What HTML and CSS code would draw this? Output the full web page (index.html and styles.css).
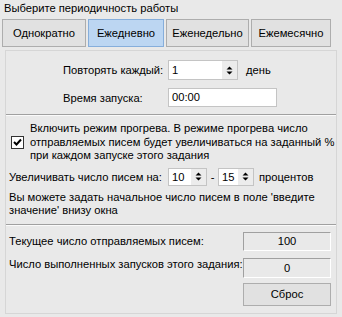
FILE: index.html
```html
<!DOCTYPE html>
<html lang="ru">
<head>
  <meta charset="UTF-8">
  <title>Периодичность работы</title>
  <link rel="stylesheet" href="styles.css">
</head>
<body>

  <div class="caption">Выберите периодичность работы</div>

  <div class="tabs">
    <button class="tab tab-once">Однократно</button>
    <button class="tab tab-daily active">Ежедневно</button>
    <button class="tab tab-weekly">Еженедельно</button>
    <button class="tab tab-monthly">Ежемесячно</button>
  </div>

  <div class="panel">

    <!-- repeat / start time -->
    <div class="schedule">
      <div class="row">
        <span class="label">Повторять каждый:</span>
        <div class="spin spin-day">
          <span class="spin-value">1</span>
          <span class="spin-arrows">
            <svg width="7" height="9" viewBox="0 0 7 9"><path d="M3.5 0.5 L6.5 3.5 L0.5 3.5 Z M0.5 5.5 L6.5 5.5 L3.5 8.5 Z" fill="#000"/></svg>
          </span>
        </div>
        <span class="unit">день</span>
      </div>
      <div class="row">
        <span class="label">Время запуска:</span>
        <div class="field field-time">00:00</div>
      </div>
    </div>

    <div class="sep"></div>

    <!-- warm-up mode -->
    <div class="warmup">
      <span class="check">
        <svg width="9" height="9" viewBox="0 0 9 9"><path d="M1 4 L3.5 6.5 L8 1.5" stroke="#000" stroke-width="2" fill="none"/></svg>
      </span>
      <p>Включить режим прогрева. В режиме прогрева число<br>отправляемых писем будет увеличиваться на заданный %<br>при каждом запуске этого задания</p>
    </div>

    <div class="increase">
      <span class="increase-label">Увеличивать число писем на:</span>
      <div class="spin spin-from">
        <span class="spin-value">10</span>
        <span class="spin-arrows">
          <svg width="7" height="9" viewBox="0 0 7 9"><path d="M3.5 0.5 L6.5 3.5 L0.5 3.5 Z M0.5 5.5 L6.5 5.5 L3.5 8.5 Z" fill="#000"/></svg>
        </span>
      </div>
      <span class="dash">-</span>
      <div class="spin spin-to">
        <span class="spin-value">15</span>
        <span class="spin-arrows">
          <svg width="7" height="9" viewBox="0 0 7 9"><path d="M3.5 0.5 L6.5 3.5 L0.5 3.5 Z M0.5 5.5 L6.5 5.5 L3.5 8.5 Z" fill="#000"/></svg>
        </span>
      </div>
      <span class="percent">процентов</span>
    </div>

    <p class="hint">Вы можете задать начальное число писем в поле 'введите<br>значение' внизу окна</p>

    <div class="sep sep-stats"></div>

    <!-- counters -->
    <div class="stats">
      <span class="label">Текущее число отправляемых писем:</span>
      <div class="counter counter-current">100</div>

      <span class="label">Число выполненных запусков этого задания:</span>
      <div class="counter counter-runs">0</div>

      <span></span>
      <button class="reset">Сброс</button>
    </div>

  </div>

</body>
</html>
```

FILE: styles.css
```css
/* ========== GLOBAL ========== */
* {
  box-sizing: border-box;
  margin: 0;
  padding: 0;
}

body {
  width: 342px;
  height: 317px;
  overflow: hidden;
  background: #e9e9e9;
  font-family: "Liberation Sans", Arial, sans-serif;
  font-size: 11.2px;
  color: #000;
  white-space: nowrap;
}

button {
  font: inherit;
  color: inherit;
}

.caption {
  padding: 2px 0 0 4px;
  line-height: 13px;
  margin-bottom: 4px;
}

/* ========== TABS ========== */
.tabs {
  display: flex;
  gap: 2px;
  padding-left: 2px;
}

.tab {
  height: 28px;
  background: #e1e1e1;
  border: 1px solid #adadad;
}

.tab-once { width: 84px; }
.tab-daily { width: 76px; }
.tab-weekly { width: 83px; }
.tab-monthly { width: 80px; }

.tab.active {
  background: #bcd6f2;
  border-color: #86aedb;
}

/* ========== PANEL ========== */
.panel {
  margin: 3px 0 0 5px;
  width: 332px;
  height: 264px;
  border: 1px solid #d6d6d6;
}

.sep {
  height: 2px;
  border-top: 1px solid #a0a0a0;
  border-bottom: 1px solid #fafafa;
  margin-top: 7px;
}

.schedule {
  display: flex;
  flex-direction: column;
  gap: 8px;
  padding: 9px 0 0 57px;
}

.schedule .row {
  display: flex;
  align-items: center;
}

.schedule .label {
  width: 105px;
}

.spin {
  display: flex;
  background: #fff;
  border: 1px solid #c4c4c4;
}

.spin-value {
  flex: 1;
  padding-left: 3px;
  line-height: 16px;
}

.spin-arrows {
  width: 15px;
  background: #ececec;
  display: flex;
  align-items: center;
  justify-content: center;
}

.spin-day {
  width: 70px;
  height: 20px;
}

.spin-day .spin-value {
  line-height: 18px;
}

.unit {
  margin-left: 8px;
}

.field {
  background: #fff;
  border: 1px solid #c4c4c4;
  padding-left: 3px;
}

.field-time {
  width: 109px;
  height: 19px;
  line-height: 17px;
}

/* ========== WARM-UP ========== */
.warmup {
  display: flex;
  align-items: center;
  margin-top: 6px;
  padding-left: 5px;
}

.check {
  width: 13px;
  height: 13px;
  border: 1px solid #333;
  background: #fff;
  display: flex;
  align-items: center;
  justify-content: center;
  margin-right: 6px;
}

.warmup p {
  line-height: 13.5px;
}

.increase {
  display: flex;
  align-items: center;
  margin-top: 5px;
  padding-left: 3px;
}

.increase-label {
  width: 159px;
}

.spin-from,
.spin-to {
  height: 18px;
}

.spin-from { width: 39px; }
.spin-to { width: 36px; }

.dash {
  width: 11px;
  text-align: center;
}

.percent {
  margin-left: 5px;
}

.hint {
  margin-top: 5px;
  padding-left: 3px;
  line-height: 13.5px;
}

/* ========== COUNTERS ========== */
.sep-stats {
  margin-top: 6px;
}

.stats {
  display: grid;
  grid-template-columns: 234px 88px;
  align-items: center;
  padding: 6px 0 0 3px;
}

.counter {
  height: 19px;
  line-height: 17px;
  text-align: center;
  border: 1px solid;
  border-color: #a0a0a0 #fff #fff #a0a0a0;
}

.counter-runs {
  height: 20px;
  line-height: 18px;
  margin-top: 7px;
}

.reset {
  height: 23px;
  margin-top: 5px;
  background: #e1e1e1;
  border: 1px solid #adadad;
}
```
